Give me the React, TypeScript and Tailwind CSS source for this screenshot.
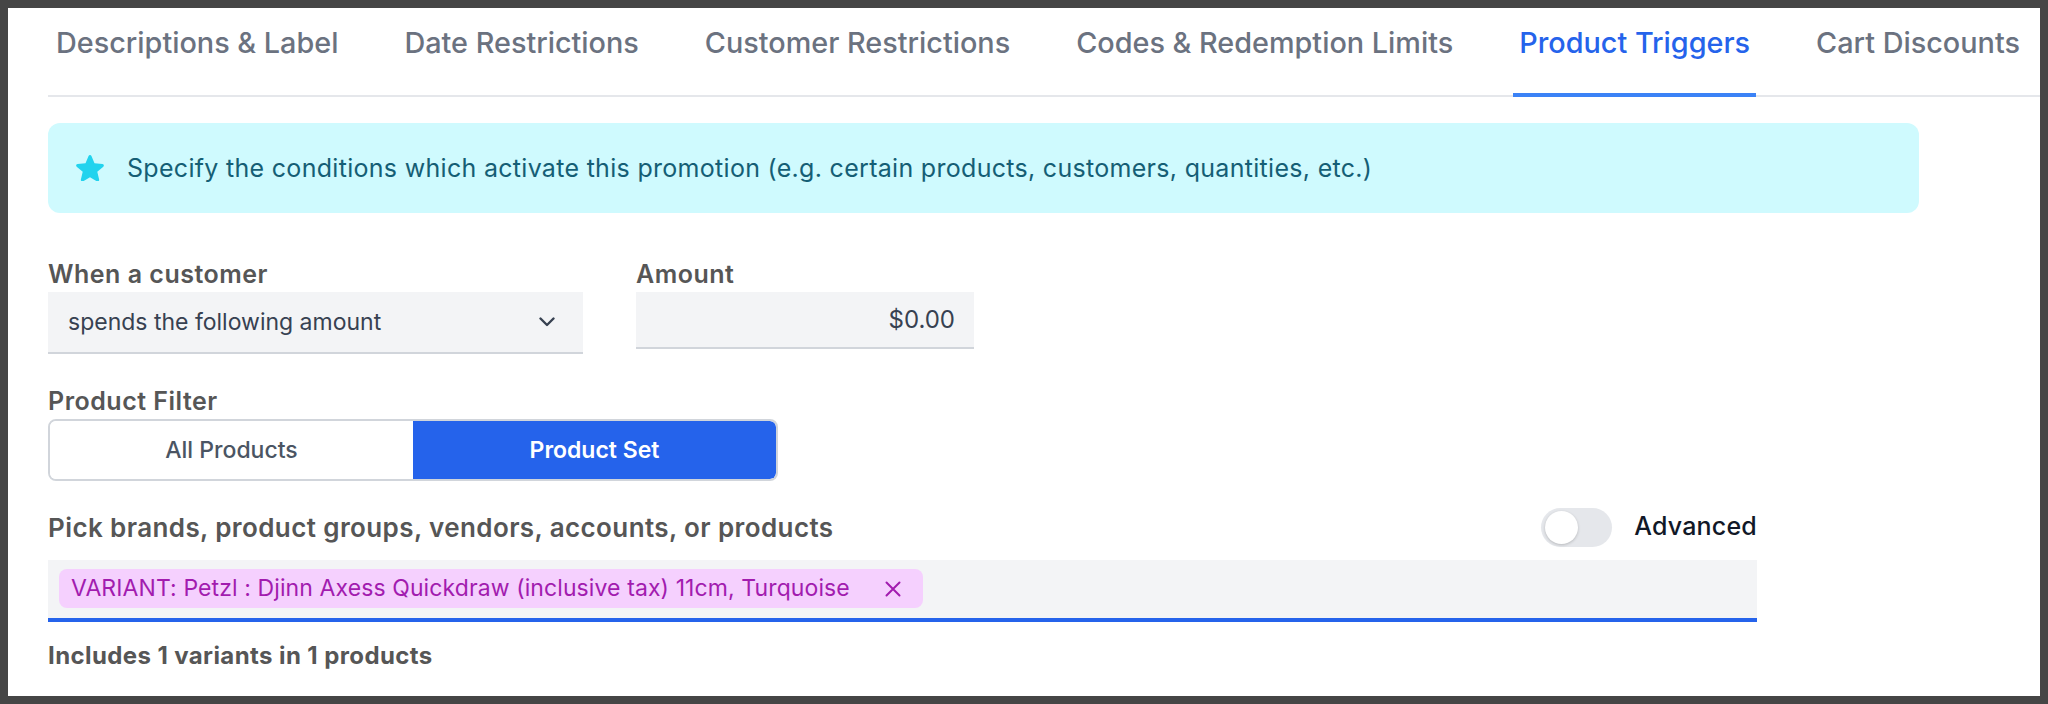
import { useState } from "react";

const tabs = [
  "Descriptions & Label",
  "Date Restrictions",
  "Customer Restrictions",
  "Codes & Redemption Limits",
  "Product Triggers",
  "Cart Discounts",
];

function StarIcon() {
  return (
    <svg viewBox="1.6 2.3 16.8 15.9" className="w-[28px] h-[26.5px] shrink-0 fill-[#22d3ee]">
      <path d="M10.868 2.884c-.321-.772-1.415-.772-1.736 0l-1.83 4.401-4.753.381c-.833.067-1.171 1.107-.536 1.651l3.62 3.102-1.106 4.637c-.194.813.691 1.456 1.405 1.02L10 15.591l4.069 2.485c.713.436 1.598-.207 1.404-1.02l-1.106-4.637 3.62-3.102c.635-.544.297-1.584-.536-1.65l-4.752-.382-1.831-4.401Z" />
    </svg>
  );
}

function ChevronDown() {
  return (
    <svg viewBox="0 0 16 10" className="w-[16px] h-[10px]" fill="none" stroke="#374151" strokeWidth={2.4} strokeLinecap="round" strokeLinejoin="round">
      <path d="M1.5 1.5 8 8l6.5-6.5" />
    </svg>
  );
}

function XIcon() {
  return (
    <svg viewBox="0 0 16 16" className="w-[16px] h-[16px]" fill="none" stroke="#a21caf" strokeWidth={2} strokeLinecap="round">
      <path d="M1.5 1.5l13 13M14.5 1.5l-13 13" />
    </svg>
  );
}

export default function App() {
  const [active, setActive] = useState("Product Triggers");
  const [filter, setFilter] = useState<"all" | "set">("set");
  const [advanced, setAdvanced] = useState(false);

  return (
    <div className="w-[2048px] h-[704px] bg-[#454545] p-[8px] font-['Inter',sans-serif]">
      <div className="w-full h-full bg-white pl-[40px] overflow-hidden">
        {/* Tabs */}
        <nav className="flex gap-[54px] border-b-2 border-[#e5e7eb] pl-[2px]">
          {tabs.map((t) => (
            <button
              key={t}
              onClick={() => setActive(t)}
              className={`px-[6px] pt-[15px] pb-[30px] leading-[40px] text-[28.8px] font-medium whitespace-nowrap border-b-4 -mb-[2px] ${
                active === t
                  ? "text-[#2563eb] border-[#3b82f6]"
                  : "text-[#6b7280] border-transparent"
              }`}
            >
              {t}
            </button>
          ))}
        </nav>

        <div className="w-[1871px]">
          {/* Info */}
          <div className="mt-[26px] h-[90px] rounded-[12px] bg-[#cffafe] flex items-center pl-[28px] gap-[23px]">
            <StarIcon />
            <p className="text-[25px] tracking-[0.3px] leading-[32px] text-[#155e75]">
              Specify the conditions which activate this promotion (e.g. certain products, customers, quantities, etc.)
            </p>
          </div>

          {/* When / Amount */}
          <div className="flex gap-[53px] mt-[45px] items-start">
            <div className="w-[535px]">
              <label className="block text-[25px] tracking-[0.5px] leading-[32px] font-semibold text-[#565656] mb-[2px]">
                When a customer
              </label>
              <div className="h-[62px] bg-[#f3f4f6] border-b-2 border-[#d1d5db] flex items-center justify-between pl-[20px] pr-[28px]">
                <span className="text-[23px] text-[#374151]">spends the following amount</span>
                <ChevronDown />
              </div>
            </div>
            <div className="w-[338px]">
              <label className="block text-[25px] tracking-[0.5px] leading-[32px] font-semibold text-[#565656] mb-[2px]">
                Amount
              </label>
              <div className="h-[57px] bg-[#f3f4f6] border-b-2 border-[#d1d5db] flex items-center justify-end pr-[19px]">
                <span className="text-[24px] text-[#374151]">$0.00</span>
              </div>
            </div>
          </div>

          {/* Product filter */}
          <label className="block mt-[31px] text-[25px] tracking-[0.5px] leading-[32px] font-semibold text-[#565656] mb-[2px]">
            Product Filter
          </label>
          <div className="w-[730px] h-[62px] border-2 border-[#d1d5db] rounded-[8px] flex overflow-hidden">
            <button
              onClick={() => setFilter("all")}
              className={`flex-1 text-[23px] font-medium ${
                filter === "all" ? "bg-[#2563eb] text-white rounded-[6px]" : "bg-white text-[#4b5563]"
              }`}
            >
              All Products
            </button>
            <button
              onClick={() => setFilter("set")}
              className={`flex-1 text-[23px] font-semibold ${
                filter === "set" ? "bg-[#2563eb] text-white rounded-r-[6px]" : "bg-white text-[#4b5563]"
              }`}
            >
              Product Set
            </button>
          </div>

          {/* Picker */}
          <div className="w-[1709px]">
            <div className="flex items-center justify-between mt-[26px] h-[40px] mb-[13px]">
              <span className="text-[26px] tracking-[0.4px] font-semibold text-[#565656]">
                Pick brands, product groups, vendors, accounts, or products
              </span>
              <div className="flex items-center gap-[22px]">
                <button
                  onClick={() => setAdvanced(!advanced)}
                  className={`relative w-[71px] h-[39px] rounded-full ${advanced ? "bg-[#2563eb]" : "bg-[#e5e7eb]"}`}
                >
                  <span
                    className={`absolute top-[3px] w-[33px] h-[33px] rounded-full bg-white shadow-[0_1px_3px_rgba(0,0,0,0.2)] ${
                      advanced ? "left-[34px]" : "left-[4px]"
                    }`}
                  />
                </button>
                <span className="text-[25px] tracking-[0.2px] font-medium text-[#111827]">Advanced</span>
              </div>
            </div>
            <div className="h-[62px] bg-[#f3f4f6] border-b-4 border-[#2563eb] pt-[9px] px-[11px]">
              <span className="inline-flex items-center h-[39px] rounded-[8px] bg-[#f5d0fe] pl-[12px] pr-[22px] gap-[35px]">
                <span className="text-[23px] tracking-[0.1px] text-[#a21caf]">
                  VARIANT: Petzl : Djinn Axess Quickdraw (inclusive tax) 11cm, Turquoise
                </span>
                <XIcon />
              </span>
            </div>
            <p className="mt-[19px] text-[24px] tracking-[0.4px] leading-[30px] font-bold text-[#565656]">
              Includes 1 variants in 1 products
            </p>
          </div>
        </div>
      </div>
    </div>
  );
}
